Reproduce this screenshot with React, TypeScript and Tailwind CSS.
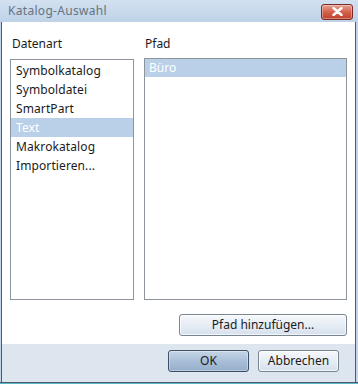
import { useState } from 'react';

const datenarten = ['Symbolkatalog', 'Symboldatei', 'SmartPart', 'Text', 'Makrokatalog', 'Importieren...'];
const pfade = ['Büro'];

function WinButton({ label, isDefault, className }: { label: string; isDefault?: boolean; className?: string }) {
    return (
        <button
            className={
                'h-[22px] rounded-[3px] border text-[12px] leading-none text-[#1b1b1b] ' +
                (isDefault
                    ? 'border-[#3c4f66] bg-gradient-to-b from-[#c6d5e6] via-[#a9bfd8] to-[#95aecb] shadow-[inset_0_0_0_1px_rgba(255,255,255,0.35)] '
                    : 'border-[#7a8592] bg-gradient-to-b from-[#f6f8fb] via-[#e6edf5] to-[#d6e1ec] shadow-[inset_0_0_0_1px_rgba(255,255,255,0.7)] ') +
                (className ?? '')
            }
        >
            {label}
        </button>
    );
}

export default function App() {
    const [art, setArt] = useState('Text');
    const [pfad, setPfad] = useState('Büro');

    return (
        <div className="w-[358px] h-[384px] flex flex-col bg-[#c2d5ea] font-['Noto_Sans',sans-serif] overflow-hidden select-none">
            {/* title bar */}
            <div className="h-[22px] flex items-center justify-between pl-[8px] pr-[5px] bg-gradient-to-b from-[#d3e1f0] to-[#bed2e8]">
                <span className="text-[12px] text-[#66737f] tracking-[0.3px]">Katalog-Auswahl</span>
                <button className="w-[32px] h-[16px] mt-[1px] flex items-center justify-center rounded-[3px] border border-[#7a2b22] bg-gradient-to-b from-[#e8a193] via-[#d4604c] to-[#c0402b] shadow-[inset_0_0_0_1px_rgba(255,255,255,0.35)]">
                    <svg width="11" height="9" viewBox="0 0 11 9">
                        <path d="M1.5 1 L9.5 8 M9.5 1 L1.5 8" stroke="#fff" strokeWidth="2.4" strokeLinecap="round" />
                    </svg>
                </button>
            </div>

            {/* client area */}
            <div className="flex-1 flex flex-col ml-[1px] mr-[2px] border-l border-r border-[#4d5a67] bg-white">
                <div className="flex-1 flex gap-[10px] pl-[8px] pr-[8px] pt-[14px]">
                    <div className="w-[124px] flex flex-col">
                        <div className="h-[16px] text-[12px] leading-[16px] text-[#1b1b1b] pl-[2px]">Datenart</div>
                        <div className="mt-[7px] h-[241px] border border-[#8e949b] pt-[1px]">
                            {datenarten.map((d) => (
                                <div
                                    key={d}
                                    onClick={() => setArt(d)}
                                    className={
                                        'h-[19px] pl-[5px] text-[12px] leading-[19px] tracking-[0.1px] ' +
                                        (d === art ? 'bg-[#bad0e8] text-white' : 'text-[#1b1b1b]')
                                    }
                                >
                                    {d}
                                </div>
                            ))}
                        </div>
                    </div>
                    <div className="flex-1 flex flex-col">
                        <div className="h-[16px] text-[12px] leading-[16px] text-[#1b1b1b] pl-[1px]">Pfad</div>
                        <div className="mt-[6px] h-[242px] border border-[#8e949b]">
                            {pfade.map((p) => (
                                <div
                                    key={p}
                                    onClick={() => setPfad(p)}
                                    className={
                                        'h-[18px] pl-[4px] text-[12px] leading-[18px] ' +
                                        (p === pfad ? 'bg-[#bad0e8] text-white' : 'text-[#1b1b1b]')
                                    }
                                >
                                    {p}
                                </div>
                            ))}
                        </div>
                    </div>
                </div>
                <div className="flex justify-end pr-[8px] pt-[13px] pb-[8px]">
                    <WinButton label="Pfad hinzufügen..." className="w-[168px]" />
                </div>
                <div className="h-[38px] flex items-start justify-end gap-[9px] pt-[6px] pr-[16px] bg-[#dde5ef]">
                    <WinButton label="OK" isDefault className="w-[81px]" />
                    <WinButton label="Abbrechen" className="w-[81px]" />
                </div>
            </div>

            {/* bottom frame */}
            <div className="h-[2px] border-t border-[#4d5a67] bg-[#5ab5c9]" />
        </div>
    );
}
